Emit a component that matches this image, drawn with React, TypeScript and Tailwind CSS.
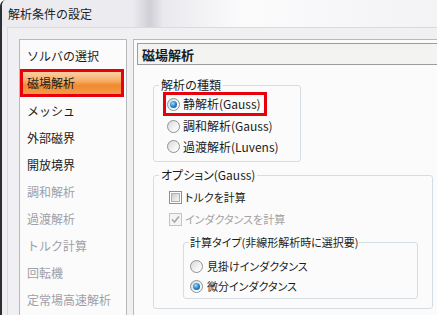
import React from "react";

const cjk = "font-['Noto_Sans_CJK_JP','Noto_Sans',sans-serif]";

interface NavItem {
  label: string;
  state: "normal" | "selected" | "disabled";
}

const navItems: NavItem[] = [
  { label: "ソルバの選択", state: "normal" },
  { label: "磁場解析", state: "selected" },
  { label: "メッシュ", state: "normal" },
  { label: "外部磁界", state: "normal" },
  { label: "開放境界", state: "normal" },
  { label: "調和解析", state: "disabled" },
  { label: "過渡解析", state: "disabled" },
  { label: "トルク計算", state: "disabled" },
  { label: "回転機", state: "disabled" },
  { label: "定常場高速解析", state: "disabled" },
];

const Radio = ({ checked }: { checked?: boolean }) => (
  <div className="w-[13px] h-[13px] shrink-0 rounded-full border border-[#8f9194] bg-[linear-gradient(135deg,#d6d7d9_0%,#f4f4f5_60%,#ffffff_100%)] flex items-center justify-center">
    {checked && (
      <div className="w-[7px] h-[7px] rounded-full bg-[radial-gradient(circle_at_40%_35%,#9fe0ff_0%,#2a8fd8_45%,#0b3f7a_100%)]" />
    )}
  </div>
);

const Checkbox = ({ checked, disabled }: { checked?: boolean; disabled?: boolean }) => (
  <div
    className={
      disabled
        ? "w-[13px] h-[13px] shrink-0 border border-[#c4c4c4] bg-[#f4f4f4] flex items-center justify-center"
        : "w-[13px] h-[13px] shrink-0 border border-[#8e8f8f] bg-white p-[1px]"
    }
  >
    {disabled ? (
      checked && (
        <svg width="9" height="9" viewBox="0 0 9 9" aria-hidden="true">
          <path d="M1 4.5 L3.5 7 L8 1.5" fill="none" stroke="#a8a8a8" strokeWidth="1.6" />
        </svg>
      )
    ) : (
      <div className="w-full h-full border border-[#b0b0b0] bg-[linear-gradient(135deg,#c9c9c9_0%,#e6e6e6_55%,#f6f6f6_100%)]" />
    )}
  </div>
);

export default function App() {
  return (
    <div
      className={`w-[437px] h-[315px] overflow-hidden bg-[#efeff3] border-l-2 border-[#2f2f33] rounded-tl-[6px] text-[#1c1c1c] whitespace-nowrap ${cjk}`}
    >
      {/* title bar */}
      <div className="h-[27px] flex items-center pl-[6px] text-[12px] leading-[14px] bg-[linear-gradient(90deg,#ececf0_0%,#ececf0_30%,#cfcfd6_34%,#e9e9ee_37%,#fbfbfc_55%,#f3f3f6_100%)]">
        解析条件の設定
      </div>

      {/* client area */}
      <div className="ml-[5px] h-[300px] border-t border-l border-[#d9d9de] bg-[#f0f0f3] pt-[11px] pl-[11px] flex gap-[6px]">
        {/* navigation */}
        <div className="w-[108px] h-[300px] shrink-0 border border-[#b9b9bd] bg-[#fafbfa] pt-[2px] flex flex-col text-[12px] leading-[14px]">
          {navItems.map((item) =>
            item.state === "selected" ? (
              <div
                key={item.label}
                className="h-[28px] mr-[2px] border-[3px] border-[#e8000b] pl-[4px] flex items-center bg-[linear-gradient(180deg,#fbd0a3_0%,#f8ad68_40%,#f28a30_60%,#f49a48_100%)] text-[#1a1a1a]"
              >
                {item.label}
              </div>
            ) : (
              <div
                key={item.label}
                className={
                  item.state === "disabled"
                    ? "h-[27px] pl-[7px] flex items-center text-[#a19fa8]"
                    : "h-[27px] pl-[7px] flex items-center"
                }
              >
                {item.label}
              </div>
            )
          )}
        </div>

        {/* settings panel */}
        <div className="w-[330px] h-[300px] shrink-0 border border-[#b9b9bd] bg-[#fafbfa] pt-[3px]">
          <div className="ml-[3px] h-[22px] border border-[#9c9c9c] bg-[#f3f4f2] pl-[4px] flex items-center text-[13px] leading-[15px] font-bold">
            磁場解析
          </div>

          <fieldset className="mt-[13px] ml-[19px] w-[148px] border border-[#d3dde3] rounded-[3px] pb-[4px] text-[12px]">
            <legend className="ml-[5px] px-[2px] leading-[14px]">解析の種類</legend>
            <div className="pl-[9px] flex flex-col items-start">
              <div className="h-[24px] border-[3px] border-[#e8000b] pl-[1px] pr-[3px] flex items-center gap-[3px]">
                <Radio checked />
                <span>静解析(Gauss)</span>
              </div>
              <div className="h-[20px] pl-[4px] flex items-center gap-[3px]">
                <Radio />
                <span>調和解析(Gauss)</span>
              </div>
              <div className="h-[21px] pl-[4px] flex items-center gap-[3px]">
                <Radio />
                <span>過渡解析(Luvens)</span>
              </div>
            </div>
          </fieldset>

          <fieldset className="mt-[6px] ml-[19px] w-[280px] border border-[#d3dde3] rounded-[3px] pb-[9px] text-[11px] [font-feature-settings:'palt']">
            <legend className="ml-[5px] px-[2px] leading-[14px] text-[12px]">オプション(Gauss)</legend>
            <div className="pt-[4px] pl-[15px] flex flex-col">
              <div className="h-[22px] flex items-center gap-[3px]">
                <Checkbox />
                <span>トルクを計算</span>
              </div>
              <div className="h-[22px] flex items-center gap-[3px]">
                <Checkbox checked disabled />
                <span className="text-[#a3a3a3]">インダクタンスを計算</span>
              </div>
            </div>

            <fieldset className="mt-[5px] ml-[29px] w-[235px] border border-[#d3dde3] rounded-[3px] pt-[7px] pb-[2px]">
              <legend className="ml-[5px] px-[1px] leading-[14px]">計算タイプ(非線形解析時に選択要)</legend>
              <div className="pl-[6px] flex flex-col">
                <div className="h-[20px] flex items-center gap-[4px]">
                  <Radio />
                  <span>見掛けインダクタンス</span>
                </div>
                <div className="h-[20px] flex items-center gap-[4px]">
                  <Radio checked />
                  <span>微分インダクタンス</span>
                </div>
              </div>
            </fieldset>
          </fieldset>
        </div>
      </div>
    </div>
  );
}
